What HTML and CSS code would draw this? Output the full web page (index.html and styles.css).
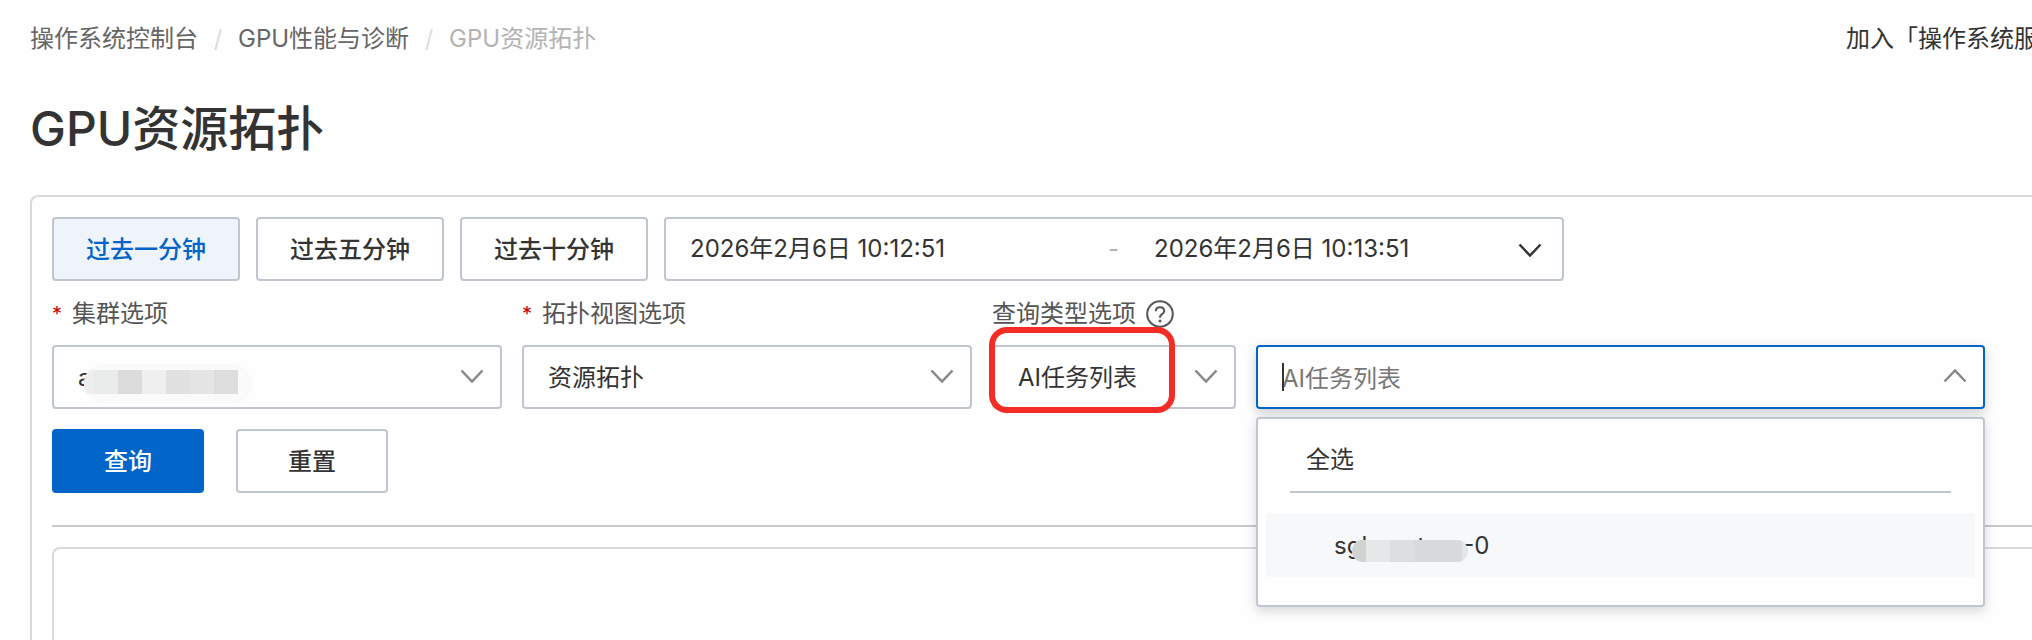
FILE: index.html
```html
<!DOCTYPE html>
<html lang="zh-CN">
<head>
<meta charset="utf-8">
<meta name="viewport" content="width=device-width, initial-scale=1">
<title>GPU资源拓扑</title>
<link rel="stylesheet" href="styles.css">
</head>
<body>
<div class="page">
  <header class="topbar">
    <nav class="breadcrumb" aria-label="breadcrumb">
      <a href="#">操作系统控制台</a>
      <span class="slash">/</span>
      <a href="#">GPU性能与诊断</a>
      <span class="slash">/</span>
      <span class="current">GPU资源拓扑</span>
    </nav>
    <a class="join" href="#">加入「操作系统服</a>
  </header>
  <h1 class="title">GPU资源拓扑</h1>
  <main class="panel">
    <form class="filters">
      <div class="times">
        <button type="button" class="btn active">过去一分钟</button>
        <button type="button" class="btn">过去五分钟</button>
        <button type="button" class="btn">过去十分钟</button>
        <div class="range">
          <input class="date" type="text" aria-label="开始时间" value="2026年2月6日 10:12:51">
          <span class="dash">-</span>
          <input class="date" type="text" aria-label="结束时间" value="2026年2月6日 10:13:51">
          <svg class="chevron dark" viewBox="0 0 24 14"><path d="M1.500 1.500 12 12.500 22.500 1.500"/></svg>
        </div>
      </div>
      <div class="fields">
        <div class="field">
          <label class="label" for="cluster"><span class="star">*</span>集群选项</label>
          <div class="control">
            <select id="cluster" class="box"><option>a</option></select>
            <span class="mask mask-cluster"><i></i><i></i><i></i><i></i><i></i><i></i><i></i></span>
            <svg class="chevron" viewBox="0 0 24 14"><path d="M1.500 1.500 12 12.500 22.500 1.500"/></svg>
          </div>
        </div>
        <div class="field">
          <label class="label" for="view"><span class="star">*</span>拓扑视图选项</label>
          <div class="control">
            <select id="view" class="box"><option>资源拓扑</option></select>
            <svg class="chevron" viewBox="0 0 24 14"><path d="M1.500 1.500 12 12.500 22.500 1.500"/></svg>
          </div>
        </div>
        <div class="field">
          <label class="label" for="type">查询类型选项
            <svg class="help" viewBox="0 0 28 28"><circle cx="14" cy="14" r="12.800"/><path d="M9.800 11.200c0-2.400 1.800-4 4.200-4s4.200 1.500 4.200 3.700c0 3.300-4.200 3.200-4.200 6.300v.6"/><circle class="dot" cx="14" cy="20.900" r="1.500"/></svg>
          </label>
          <div class="control">
            <select id="type" class="box"><option>AI任务列表</option></select>
            <svg class="chevron" viewBox="0 0 24 14"><path d="M1.500 1.500 12 12.500 22.500 1.500"/></svg>
            <span class="highlight"></span>
          </div>
        </div>
        <div class="field last">
          <div class="control">
            <input class="box open" type="text" role="combobox" aria-expanded="true" aria-controls="tasks" aria-label="AI任务列表" placeholder="AI任务列表">
            <span class="caret"></span>
            <svg class="chevron" viewBox="0 0 24 14"><path d="M1.500 12.500 12 1.500 22.500 12.500"/></svg>
            <div class="menu" id="tasks">
              <button type="button" class="all">全选</button>
              <button type="button" class="option">
                <span>sgl</span><span class="mid">t</span><span>-0</span>
                <span class="mask mask-task"><i></i><i></i><i></i><i></i></span>
              </button>
            </div>
          </div>
        </div>
      </div>
      <div class="actions">
        <button type="button" class="btn primary">查询</button>
        <button type="reset" class="btn">重置</button>
      </div>
    </form>
    <section class="canvas"></section>
  </main>
</div>
</body>
</html>
```
FILE: styles.css
```css
* { box-sizing: border-box; }
body {
  margin: 0;
  background: #fefefe;
  color: #333;
  font-family: Inter, "Noto Sans CJK SC", sans-serif;
  font-size: 24px;
  line-height: 32px;
}
a { color: inherit; text-decoration: none; }
button, input, select { font: inherit; color: inherit; margin: 0; }
i { display: block; }

.page {
  display: flex;
  flex-direction: column;
  min-height: 100vh;
  padding-left: 30px;
  overflow: hidden;
}
.topbar {
  display: flex;
  justify-content: space-between;
  padding-top: 23px;
  white-space: nowrap;
}
.breadcrumb { display: flex; color: #666; }
.slash { width: 40px; text-align: center; color: #ddd; }
.current { color: #b3b3b3; }
.join { width: 186px; }
.title {
  margin: 42px 0 34px;
  font-size: 48px;
  line-height: 64px;
  font-weight: 500;
}

.panel {
  flex: 1;
  display: flex;
  flex-direction: column;
  padding: 20px 0 0 20px;
  border: solid #d9d9d9;
  border-width: 2px 0 0 2px;
  border-top-left-radius: 8px;
}
.filters {
  padding-bottom: 32px;
  border-bottom: 2px solid #c8c8c8;
}
.times { display: flex; gap: 16px; }
.btn {
  height: 64px;
  min-width: 152px;
  padding: 2px 32px 0;
  border: 2px solid #c0c6d0;
  border-radius: 4px;
  background: #fefefe;
  font-weight: 500;
}
.btn.active { background: #eff3fa; color: #0064c8; }
.btn.primary { background: #0064c8; border-color: #0064c8; color: #fff; }

.range {
  position: relative;
  display: flex;
  align-items: center;
  width: 900px;
  height: 64px;
  padding-left: 24px;
  border: 2px solid #c0c6d0;
  border-radius: 4px;
}
.date {
  width: 400px;
  padding: 0;
  border: 0;
  outline: 0;
  background: none;
}
.dash { width: 64px; padding-left: 18px; color: #b3b3b3; }

.chevron {
  position: absolute;
  right: 18px;
  top: 24px;
  width: 24px;
  height: 14px;
  fill: none;
  stroke: #888;
  stroke-width: 2.500;
  pointer-events: none;
}
.chevron.dark { stroke: #333; right: 20px; }

.fields {
  display: grid;
  grid-template-columns: minmax(0, 450fr) minmax(0, 450fr) minmax(0, 244fr) minmax(0, 729fr);
  gap: 20px;
  padding-right: 47px;
}
.field {
  display: flex;
  flex-direction: column;
  justify-content: flex-end;
}
.label {
  display: flex;
  align-items: center;
  height: 64px;
  padding-top: 2px;
  color: #555;
  white-space: nowrap;
}
.star { width: 20px; font-size: 20px; color: #c80000; }
.help { width: 28px; height: 28px; margin-left: 10px; fill: none; stroke: #555; stroke-width: 2; }
.help .dot { fill: #555; stroke: none; }
.control { position: relative; }
.box {
  display: block;
  width: 100%;
  height: 64px;
  padding: 2px 56px 0 24px;
  border: 2px solid #c0c6d0;
  border-radius: 4px;
  background: #fefefe;
  outline: 0;
  appearance: none;
}
.box.open {
  border-color: #0064c8;
  box-shadow: 0 4px 12px rgba(0, 0, 0, 0.2);
}
.box::placeholder { color: #777; opacity: 1; }
.caret {
  position: absolute;
  left: 26px;
  top: 18px;
  width: 2px;
  height: 28px;
  background: #333;
}
.highlight {
  position: absolute;
  left: -3px;
  top: -18px;
  width: 186px;
  height: 86px;
  border: 6px solid #f42c26;
  border-radius: 18px;
  pointer-events: none;
}

.mask { position: absolute; display: flex; overflow: hidden; }
.mask i { flex: none; width: 24px; }
.mask-cluster {
  left: 32px;
  top: 19px;
  width: 168px;
  height: 40px;
  padding: 6px 0 10px;
  border-radius: 20px;
  background: #fafafa;
}
.mask-cluster i:nth-child(1) { width: 10px; background: #edefee; }
.mask-cluster i:nth-child(2) { background: #eaebeb; }
.mask-cluster i:nth-child(3) { background: #dcdcdc; }
.mask-cluster i:nth-child(4) { background: #efefef; }
.mask-cluster i:nth-child(5) { background: #e1e1e1; }
.mask-cluster i:nth-child(6) { background: #e5e5e5; }
.mask-cluster i:nth-child(7) { background: #dddddd; }

.menu {
  position: absolute;
  z-index: 1;
  top: calc(100% + 8px);
  left: 0;
  right: 0;
  padding: 8px 8px 28px;
  border: 2px solid #c0c6d0;
  border-radius: 4px;
  background: #fefefe;
  box-shadow: 0 4px 12px rgba(0, 0, 0, 0.16);
}
.all {
  display: block;
  width: calc(100% - 48px);
  height: 66px;
  margin: 0 24px 20px;
  padding: 2px 16px 0;
  border: 0;
  border-bottom: 2px solid #c0c6d0;
  background: none;
  text-align: left;
}
.option {
  position: relative;
  display: flex;
  align-items: center;
  width: 100%;
  height: 64px;
  padding: 2px 68px 0;
  border: 0;
  border-radius: 4px;
  background: #f7f8fa;
}
.mid { width: 96px; padding-left: 50px; text-align: left; }
.mask-task {
  left: 86px;
  top: 27px;
  width: 116px;
  height: 22px;
  border-radius: 11px;
  background: #e4e5e7;
}
.mask-task i:nth-child(1) { width: 14px; background: #d1d3d2; }
.mask-task i:nth-child(2) { background: #e6e7e9; }
.mask-task i:nth-child(3) { background: #dddee0; }
.mask-task i:nth-child(4) { width: 48px; background: #d9dadc; }

.actions { display: flex; gap: 32px; padding-top: 20px; }
.canvas {
  flex: 1;
  min-height: 80px;
  margin-top: 20px;
  border: solid #d9d9d9;
  border-width: 2px 0 0 2px;
  border-top-left-radius: 8px;
}
```
